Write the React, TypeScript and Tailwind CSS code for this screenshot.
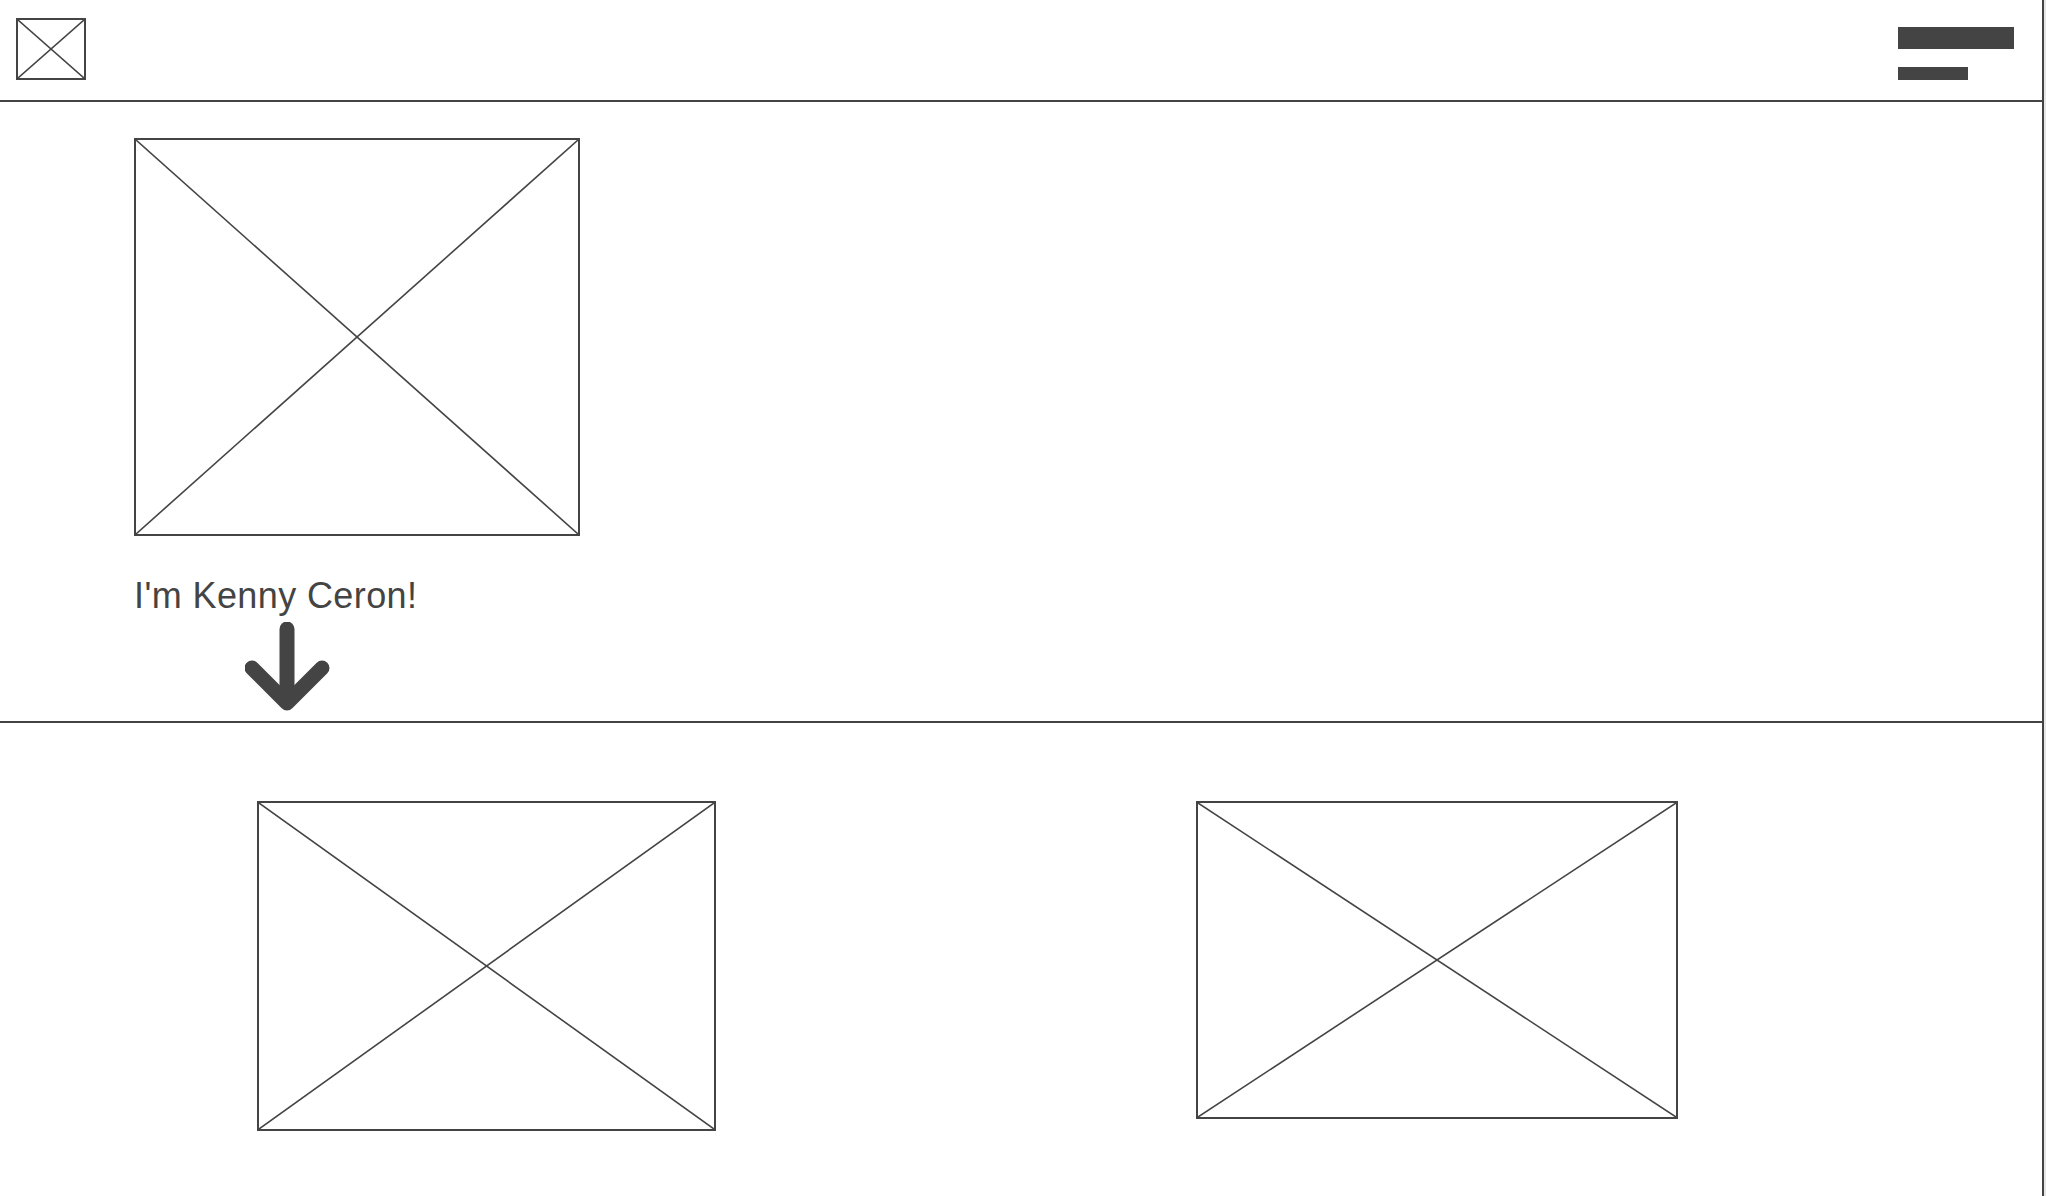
import React from "react";

function Placeholder({ className }: { className: string }) {
  return (
    <div className={`relative border-2 border-[#444] ${className}`}>
      <svg
        className="absolute inset-0 h-full w-full"
        viewBox="0 0 100 100"
        preserveAspectRatio="none"
      >
        <line x1="0" y1="0" x2="100" y2="100" stroke="#444" strokeWidth="1.6" vectorEffect="non-scaling-stroke" />
        <line x1="100" y1="0" x2="0" y2="100" stroke="#444" strokeWidth="1.6" vectorEffect="non-scaling-stroke" />
      </svg>
    </div>
  );
}

function DownArrow() {
  return (
    <svg width="86" height="91" viewBox="0 0 86 91" fill="none">
      <line x1="42" y1="7" x2="42" y2="79" stroke="#444" strokeWidth="15" strokeLinecap="round" />
      <polyline
        points="7,46 42,81 77,46"
        stroke="#444"
        strokeWidth="15"
        strokeLinecap="round"
        strokeLinejoin="round"
      />
    </svg>
  );
}

export default function App() {
  return (
    <div className="flex min-h-[1196px] w-[2046px] bg-white font-['Liberation_Sans',Arial,sans-serif] text-[#444]">
      <div className="flex w-[2044px] flex-col border-r-2 border-[#444]">
        {/* Header */}
        <header className="flex h-[102px] items-start justify-between border-b-2 border-[#444] pl-4 pr-[28px] pt-[18px]">
          <Placeholder className="h-[62px] w-[70px]" />
          <div className="flex flex-col gap-[18px] pt-[9px]">
            <div className="h-[22px] w-[116px] bg-[#444]" />
            <div className="h-[13px] w-[70px] bg-[#444]" />
          </div>
        </header>

        {/* Hero */}
        <section className="flex h-[621px] flex-col border-b-2 border-[#444] pl-[134px] pt-[36px]">
          <Placeholder className="h-[398px] w-[446px]" />
          <h1 className="mt-[39px] text-[36px] leading-[41px] tracking-[0.4px]">I'm Kenny Ceron!</h1>
          <div className="ml-[111px] mt-[6px]">
            <DownArrow />
          </div>
        </section>

        {/* Gallery */}
        <section className="flex flex-1 items-start gap-[480px] pl-[257px] pt-[77px]">
          <Placeholder className="mt-px h-[330px] w-[459px]" />
          <Placeholder className="mt-px h-[318px] w-[482px]" />
        </section>
      </div>
      <div className="w-[2px] bg-[#e6e6e6]" />
    </div>
  );
}
